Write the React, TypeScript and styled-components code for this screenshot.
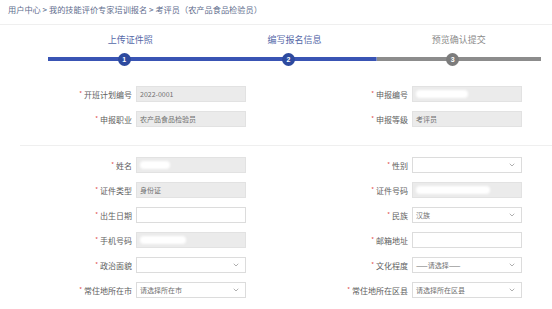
import React from 'react';
import styled, { createGlobalStyle } from 'styled-components';
import { ChevronDown } from 'lucide-react';

const GlobalStyle = createGlobalStyle`
    body {
        margin: 0;
        background: #ffffff;
        font-family: "Noto Sans CJK SC", "Noto Sans", sans-serif;
    }
`;

const Page = styled.div`
    width: 552px;
    height: 309px;
    overflow: hidden;
`;

const Breadcrumb = styled.div`
    height: 25px;
    padding: 0 8px;
    display: flex;
    align-items: center;
    padding-bottom: 7px;
    box-sizing: border-box;
    border-bottom: 1px solid #efefef;
    font-size: 8.2px;
    color: #5f6e8e;
    white-space: nowrap;
`;

const Steps = styled.div`
    display: flex;
    margin: 8px 0 0 48px;
    width: 493px;
`;

const Step = styled.div`
    flex: 1;
    display: flex;
    flex-direction: column;
    align-items: center;
    gap: 5px;
`;

const StepTitle = styled.div<{ $active: boolean }>`
    height: 14px;
    line-height: 13px;
    font-size: 9px;
    color: ${p => (p.$active ? '#5568a8' : '#8a8a8a')};
`;

const Track = styled.div<{ $active: boolean }>`
    width: 100%;
    height: 14px;
    display: flex;
    justify-content: center;
    align-items: center;
    background: linear-gradient(
            ${p => (p.$active ? '#3954b4' : '#8c8c8c')},
            ${p => (p.$active ? '#3954b4' : '#8c8c8c')}
        )
        center / 100% 4px no-repeat;
`;

const Dot = styled.div<{ $active: boolean }>`
    width: 13px;
    height: 13px;
    margin-right: 12px;
    border-radius: 50%;
    background: ${p => (p.$active ? '#2d4a9f' : '#7c7c7c')};
    color: #ffffff;
    font-size: 7px;
    font-family: "Liberation Sans", sans-serif;
    font-weight: bold;
    display: flex;
    align-items: center;
    justify-content: center;
`;

const Section = styled.div<{ $top: number }>`
    display: grid;
    grid-template-columns: 276px 276px;
    row-gap: 9px;
    padding-top: ${p => p.$top}px;
`;

const Divider = styled.div`
    margin: 18px 0 11px 20px;
    height: 1px;
    background: #efefef;
`;

const Row = styled.div`
    display: flex;
    align-items: center;
    gap: 4px;
`;

const Label = styled.div`
    width: 132px;
    text-align: right;
    font-size: 8px;
    color: #606060;
    white-space: nowrap;
`;

const Star = styled.span`
    color: #e04848;
    font-size: 6px;
    margin-right: 2px;
    vertical-align: 2px;
`;

const Control = styled.div<{ $readonly?: boolean }>`
    width: 110px;
    height: 16px;
    box-sizing: border-box;
    border: 1px solid ${p => (p.$readonly ? '#e2e2e2' : '#dcdcdc')};
    background: ${p => (p.$readonly ? '#ebebeb' : '#ffffff')};
    padding: 0 5px 0 3px;
    display: flex;
    align-items: center;
    justify-content: space-between;
    font-size: 7px;
    color: #707070;
    white-space: nowrap;
`;

const Mask = styled.span<{ $width: number }>`
    width: ${p => p.$width}px;
    height: 8px;
    border-radius: 5px;
    background: #ffffff;
    filter: blur(1px);
`;

const Chevron = styled(ChevronDown)`
    color: #888888;
    flex-shrink: 0;
`;

type Field = {
    label: string;
    value?: string;
    readonly?: boolean;
    select?: boolean;
    mask?: number;
};

const FieldRow = ({ field }: { field: Field }) => (
    <Row>
        <Label>
            <Star>*</Star>
            {field.label}
        </Label>
        <Control $readonly={field.readonly}>
            {field.mask ? <Mask $width={field.mask} /> : <span>{field.value}</span>}
            {field.select && <Chevron size={8} strokeWidth={2} />}
        </Control>
    </Row>
);

const topFields: Field[] = [
    { label: '开班计划编号', value: '2022-0001', readonly: true },
    { label: '申报编号', readonly: true, mask: 52 },
    { label: '申报职业', value: '农产品食品检验员', readonly: true },
    { label: '申报等级', value: '考评员', readonly: true }
];

const personFields: Field[] = [
    { label: '姓名', readonly: true, mask: 30 },
    { label: '性别', select: true },
    { label: '证件类型', value: '身份证', readonly: true },
    { label: '证件号码', readonly: true, mask: 74 },
    { label: '出生日期', value: '' },
    { label: '民族', value: '汉族', select: true },
    { label: '手机号码', readonly: true, mask: 46 },
    { label: '邮箱地址', value: '' },
    { label: '政治面貌', value: '', select: true },
    { label: '文化程度', value: '——请选择——', select: true },
    { label: '常住地所在市', value: '请选择所在市', select: true },
    { label: '常住地所在区县', value: '请选择所在区县', select: true }
];

const steps = [
    { title: '上传证件照', active: true },
    { title: '编写报名信息', active: true },
    { title: '预览确认提交', active: false }
];

const App = () => {
    return (
        <Page>
            <GlobalStyle />
            <Breadcrumb>
                用户中心 &gt; 我的技能评价专家培训报名 &gt; 考评员（农产品食品检验员）
            </Breadcrumb>

            <Steps>
                {steps.map((step, i) => (
                    <Step key={step.title}>
                        <StepTitle $active={step.active}>{step.title}</StepTitle>
                        <Track $active={step.active}>
                            <Dot $active={step.active}>{i + 1}</Dot>
                        </Track>
                    </Step>
                ))}
            </Steps>

            <Section $top={20}>
                {topFields.map(f => (
                    <FieldRow key={f.label} field={f} />
                ))}
            </Section>

            <Divider />

            <Section $top={0}>
                {personFields.map(f => (
                    <FieldRow key={f.label} field={f} />
                ))}
            </Section>
        </Page>
    );
};

export default App;
